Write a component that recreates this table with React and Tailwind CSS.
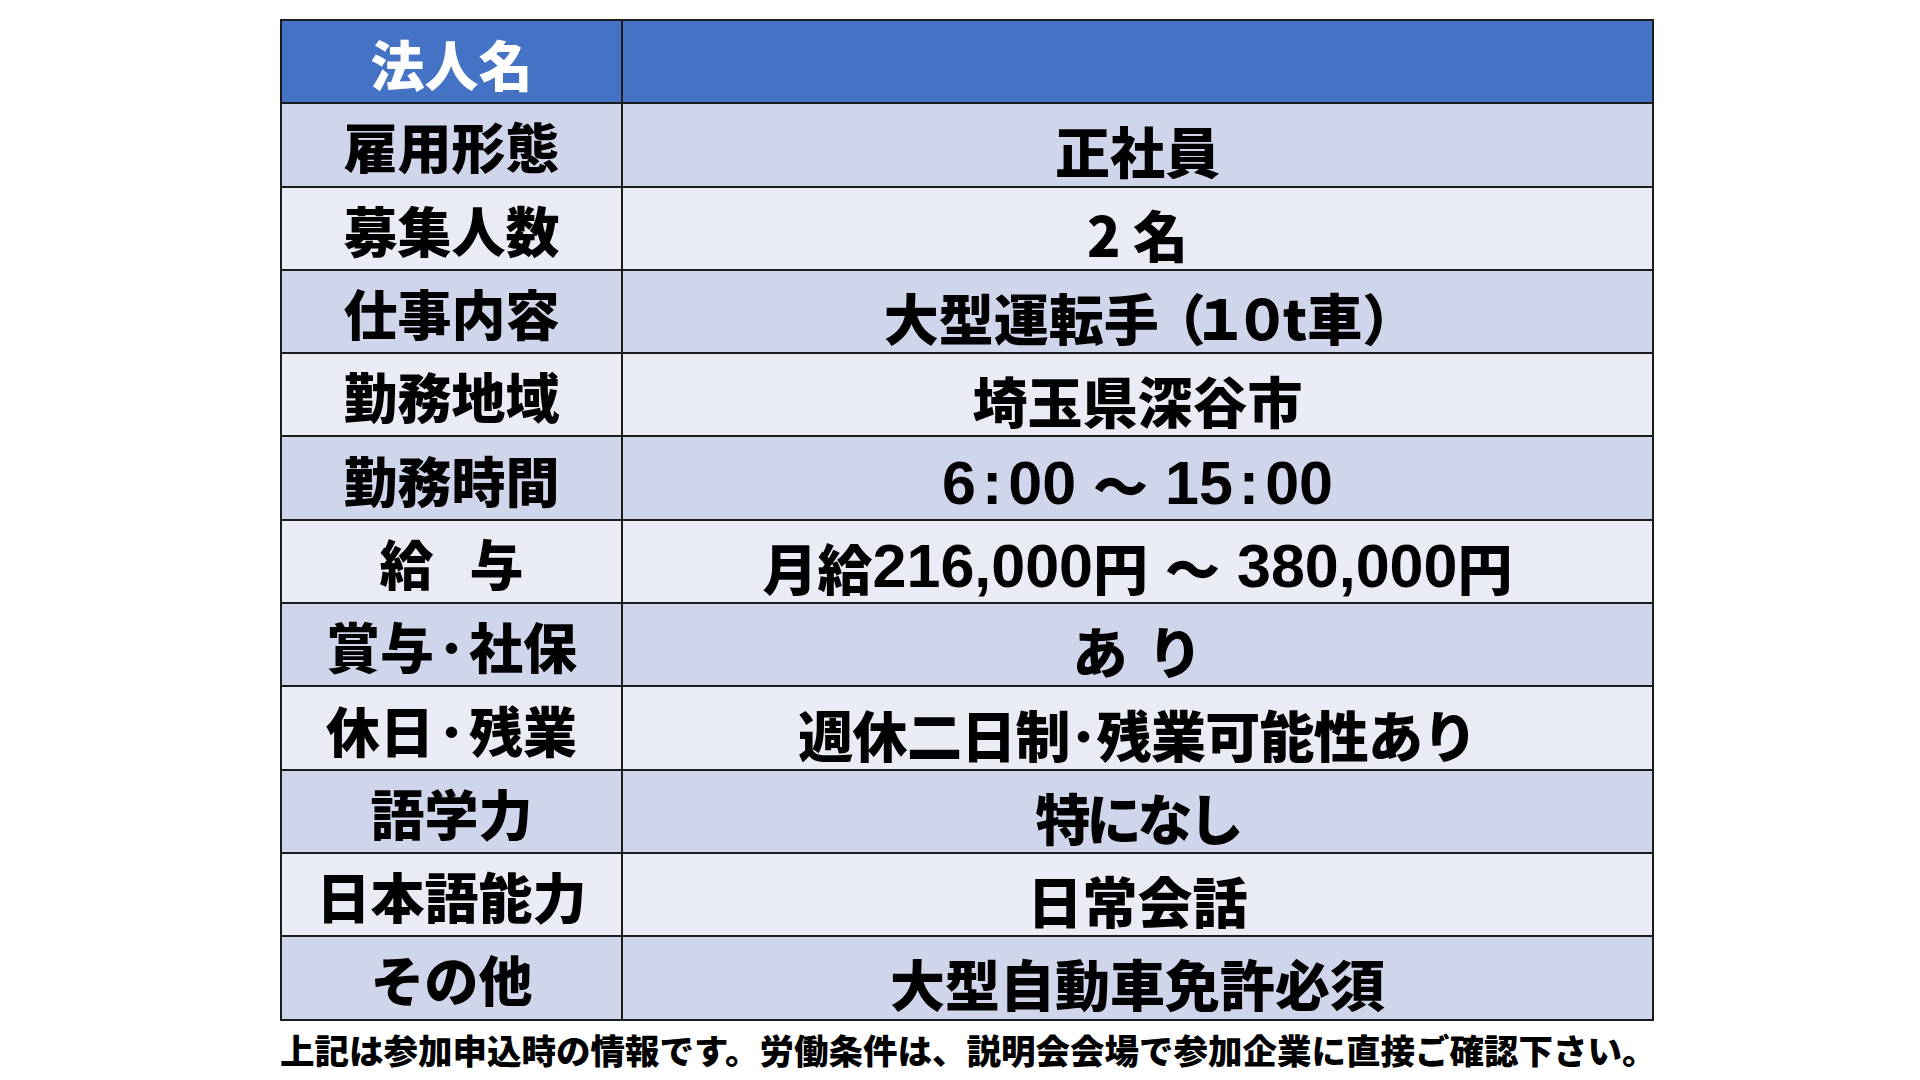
const N = ({ children }) => (
  <span className="font-['Liberation_Sans',sans-serif] text-[61px] font-bold">{children}</span>
)

const C = () => <span className="px-[6px]">:</span>

const Dot = () => <span className="px-[4px]">･</span>

const rows = [
  ['雇用形態', '正社員'],
  ['募集人数', '2 名'],
  ['仕事内容', <>大型運転手<span className="-ml-[8px] tracking-[-13px]">（１０</span><span className="pl-[6px]">t</span>車<span className="-mr-[26px]">）</span></>],
  ['勤務地域', '埼玉県深谷市'],
  ['勤務時間', <><N>6<C />00</N><N> </N>～<N> </N><N>15<C />00</N></>],
  [<><span>給</span><span className="w-[36px]"></span><span>与</span></>, <>月給<N>216,000</N>円<N> </N>～<N> </N><N>380,000</N>円</>],
  [<>賞与<Dot />社保</>, <><span>あ</span><span className="w-[20px]"></span><span>り</span></>],
  [<>休日<Dot />残業</>, <span className="tracking-[-0.7px]">週休二日制･残業可能性あり</span>],
  ['語学力', <span className="tracking-[-4px]">特になし</span>],
  ['日本語能力', '日常会話'],
  ['その他', '大型自動車免許必須'],
]

const App = () => {
  return (
    <div className="w-[1920px] h-[1080px] bg-white overflow-hidden font-['Noto_Sans_CJK_JP',sans-serif] text-black">
      <div className="ml-[280px] pt-[19px] w-[1374px]">
        <div className="border-l-2 border-t-2 border-[#1c1c1c]">
          <div className="grid grid-cols-[341px_1fr] h-[83.3px] bg-[#4472c4]">
            <div className="border-r-2 border-b-2 border-[#1c1c1c] flex items-center justify-center pt-[4px] text-white text-[54px] font-black leading-none">
              法人名
            </div>
            <div className="border-r-2 border-b-2 border-[#1c1c1c]"></div>
          </div>
          {rows.map((r, i) => (
            <div
              key={i}
              className={`grid grid-cols-[341px_1fr] h-[83.3px] ${i % 2 === 0 ? 'bg-[#cfd5ea]' : 'bg-[#e9ebf5]'}`}
            >
              <div className="border-r-2 border-b-2 border-[#1c1c1c] flex items-center justify-center pt-[3px] text-[54px] font-black leading-none whitespace-pre">
                {r[0]}
              </div>
              <div className="border-r-2 border-b-2 border-[#1c1c1c] flex items-center justify-center pt-[10px] text-[55px] font-black leading-none whitespace-pre">
                {r[1]}
              </div>
            </div>
          ))}
        </div>
        <p className="mt-[11px] text-[34.5px] font-black leading-none whitespace-nowrap">
          上記は参加申込時の情報です。労働条件は、説明会会場で参加企業に直接ご確認下さい。
        </p>
      </div>
    </div>
  )
}

export default App
